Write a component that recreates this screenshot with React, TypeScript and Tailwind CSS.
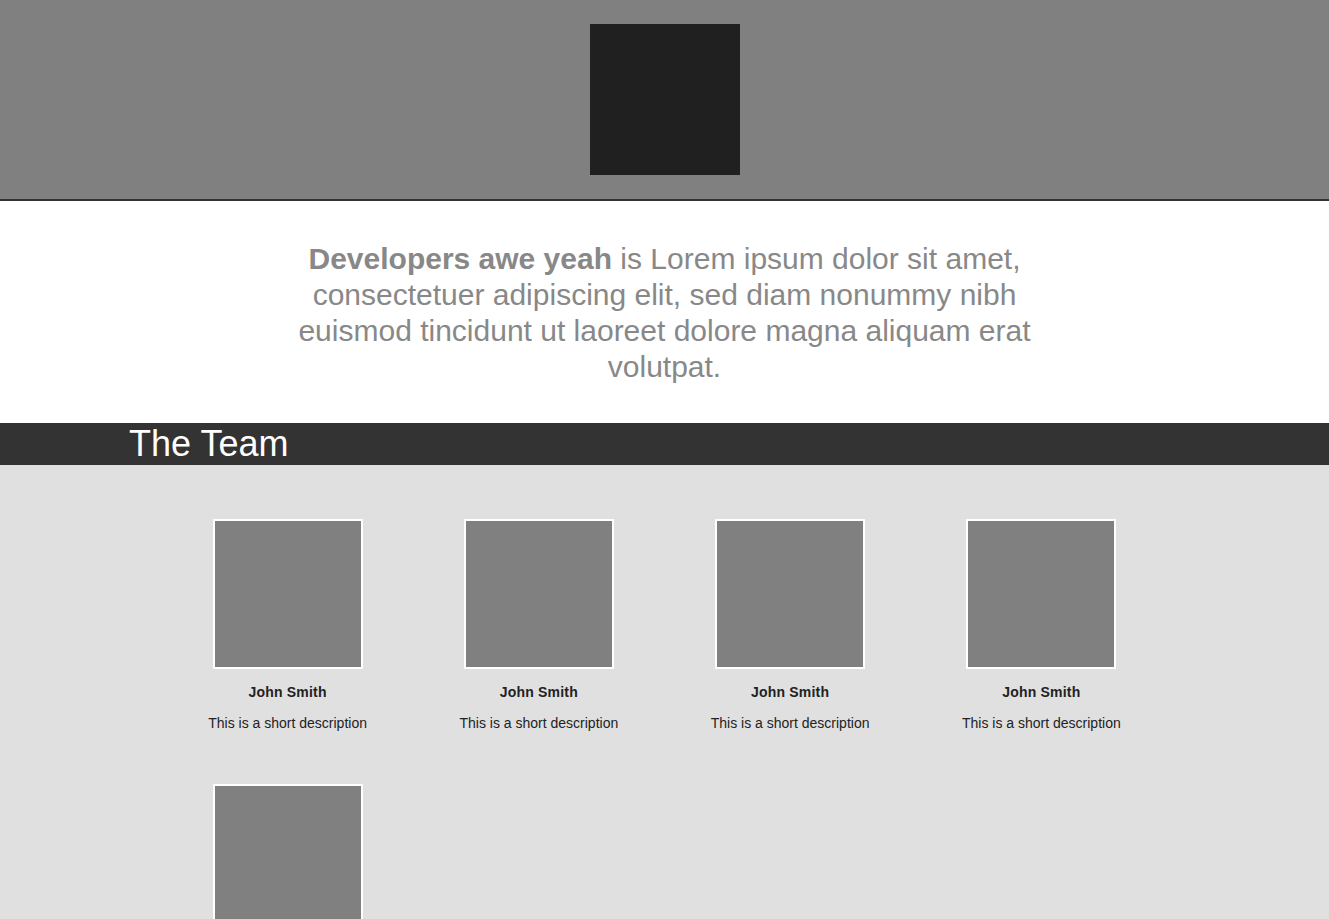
const members = Array.from({ length: 5 }, () => ({
  name: 'John Smith',
  description: 'This is a short description',
}));

const App = () => {
  return (
    <div className="min-h-[919px] bg-[#e0e0e0] font-['Liberation_Sans',Arial,sans-serif]">
      <header className="bg-[#808080] h-[201px] border-b-2 border-[#333333] flex justify-center pt-[24px]">
        <div className="w-[150px] h-[151px] bg-[#202020]" />
      </header>

      <section className="bg-white pt-[40px] pb-[38px] flex justify-center">
        <p className="max-w-[780px] text-center text-[30px] leading-[36px] text-[#888888]">
          <strong className="font-bold">Developers awe yeah</strong> is Lorem ipsum dolor sit amet,
          consectetuer adipiscing elit, sed diam nonummy nibh euismod tincidunt ut laoreet dolore
          magna aliquam erat volutpat.
        </p>
      </section>

      <div className="bg-[#333333] h-[42px] px-[129px] flex items-center">
        <h2 className="text-white text-[36px] leading-[42px]">The Team</h2>
      </div>

      <section className="pt-[54px] pb-10">
        <ul className="w-[1005px] mx-auto grid grid-cols-4 gap-y-[50px]">
          {members.map((m, i) => (
            <li key={i} className="flex flex-col items-center text-[#222222] text-[14px]">
              <div className="w-[150px] h-[150px] border-2 border-white bg-[#808080]" />
              <span className="mt-[13px] font-bold tracking-[0.2px]">{m.name}</span>
              <span className="mt-[10px]">{m.description}</span>
            </li>
          ))}
        </ul>
      </section>
    </div>
  );
};

export default App;
